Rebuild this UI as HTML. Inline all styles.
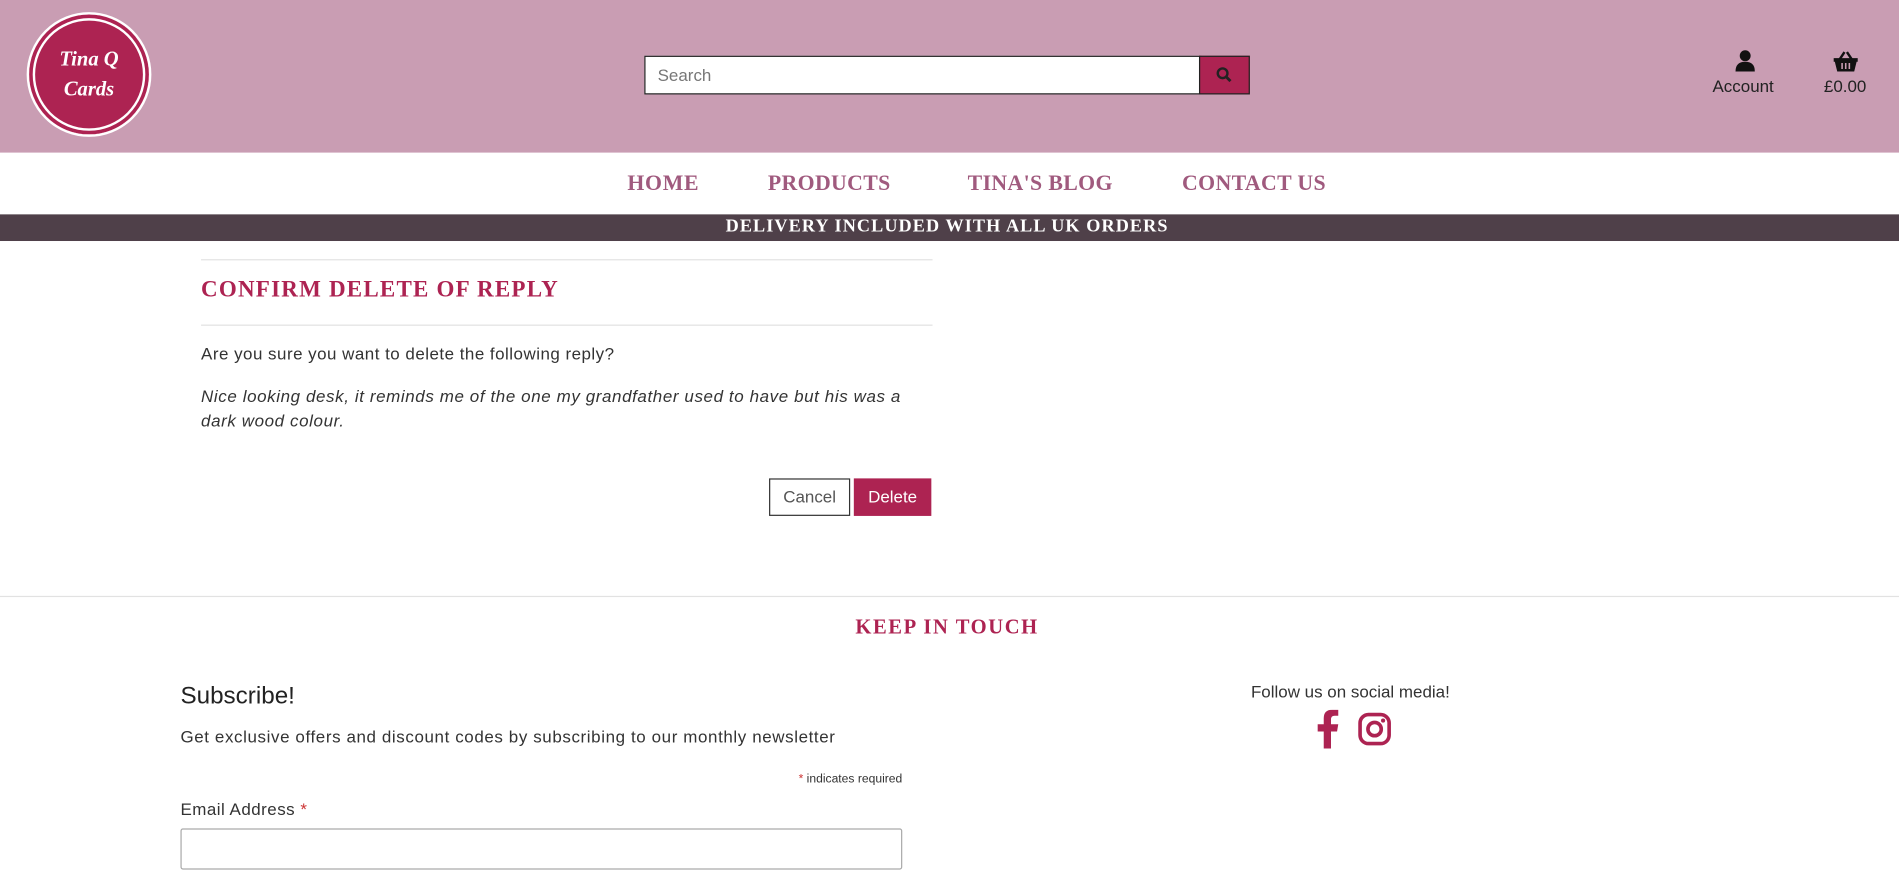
<!DOCTYPE html>
<html><head><meta charset="utf-8"><style>
html,body{margin:0;padding:0;overflow:hidden;width:1899px;height:886px;background:#fff}
#w{position:absolute;left:0;top:0;width:1568px;height:732px;transform:scale(1.2111);transform-origin:0 0;font-family:"Liberation Sans",sans-serif;color:#333}
.a{position:absolute;white-space:nowrap}
.serif{font-family:"Liberation Serif",serif;font-weight:bold}
.b{letter-spacing:0.4px}
</style></head><body><div id="w">
<div class="a" style="left:0;top:0;width:1568px;height:126px;background:#c99db3"></div>
<div class="a" style="left:22px;top:10px;width:99px;height:99px;border-radius:50%;background:#ad2352;border:2px solid #fff;box-shadow:inset 0 0 0 3px #ad2352, inset 0 0 0 5px #fff"></div>
<div class="a serif" style="left:22px;top:36px;width:103px;text-align:center;color:#fff;font-style:italic;font-size:17px;line-height:25px">Tina Q<br>Cards</div>
<div class="a" style="left:532px;top:46px;width:458px;height:30px;background:#fff;border:1px solid #222"></div>
<div class="a" style="left:543px;top:54px;font-size:14px;color:#777">Search</div>
<div class="a" style="left:990px;top:46px;width:40px;height:30px;background:#ad2352;border:1px solid #222"></div>
<svg class="a" style="left:1004px;top:55px" width="13" height="13" viewBox="0 0 13 13"><circle cx="5.5" cy="5.5" r="4" fill="none" stroke="#222" stroke-width="2"/><path d="M8.5 8.5L12 12" stroke="#222" stroke-width="2.4"/></svg>
<svg class="a" style="left:1433px;top:41px" width="16" height="18" viewBox="0 0 16 18"><circle cx="8" cy="5" r="4.5" fill="#111"/><path d="M0 18Q0 10 8 10Q16 10 16 18Z" fill="#111"/></svg>
<div class="a" style="left:1414px;top:63px;font-size:14px;color:#222">Account</div>
<svg class="a" style="left:1514px;top:42px" width="20" height="17" viewBox="0 0 20 17"><path d="M5 7L9 1M15 7L11 1" stroke="#111" stroke-width="2"/><path d="M0 6H20V9H19L17 17H3L1 9H0Z" fill="#111"/><path d="M7 10V15M10 10V15M13 10V15" stroke="#c99db3" stroke-width="1.3"/></svg>
<div class="a" style="left:1506px;top:63px;font-size:14px;color:#222">£0.00</div>
<div class="a serif" style="left:518px;top:141px;font-size:18px;color:#a05a7e;letter-spacing:0.6px">HOME</div>
<div class="a serif" style="left:634px;top:141px;font-size:18px;color:#a05a7e;letter-spacing:0.3px">PRODUCTS</div>
<div class="a serif" style="left:799px;top:141px;font-size:18px;color:#a05a7e;letter-spacing:0.3px">TINA'S BLOG</div>
<div class="a serif" style="left:976px;top:141px;font-size:18px;color:#a05a7e;letter-spacing:0.3px">CONTACT US</div>
<div class="a" style="left:0;top:177px;width:1568px;height:22px;background:#4f4049"></div>
<div class="a serif" style="left:0;top:179px;width:1564px;text-align:center;color:#fff;font-size:15px;letter-spacing:0.9px">DELIVERY INCLUDED WITH ALL UK ORDERS</div>
<div class="a" style="left:166px;top:214px;width:604px;height:1px;background:#e2e2e2"></div>
<div class="a serif" style="left:166px;top:229px;font-size:19px;color:#ad2352;letter-spacing:1px">CONFIRM DELETE OF REPLY</div>
<div class="a" style="left:166px;top:268px;width:604px;height:1px;background:#e2e2e2"></div>
<div class="a b" style="left:166px;top:284px;font-size:14px">Are you sure you want to delete the following reply?</div>
<div class="a b" style="left:166px;top:317px;font-size:14px;font-style:italic;line-height:20px;letter-spacing:0.5px">Nice looking desk, it reminds me of the one my grandfather used to have but his was a<br>dark wood colour.</div>
<div class="a" style="left:635px;top:395px;width:65px;height:29px;border:1px solid #333;text-align:center;line-height:29px;font-size:14px;color:#555">Cancel</div>
<div class="a" style="left:705px;top:395px;width:64px;height:31px;background:#ad2352;text-align:center;line-height:31px;font-size:14px;color:#fff">Delete</div>
<div class="a" style="left:0;top:492px;width:1568px;height:1px;background:#e2e2e2"></div>
<div class="a serif" style="left:0;top:508px;width:1564px;text-align:center;font-size:17px;color:#ad2352;letter-spacing:1.3px">KEEP IN TOUCH</div>
<div class="a" style="left:149px;top:564px;font-size:20px;color:#222">Subscribe!</div>
<div class="a b" style="left:149px;top:600px;font-size:14px;letter-spacing:0.5px">Get exclusive offers and discount codes by subscribing to our monthly newsletter</div>
<div class="a" style="left:560px;top:638px;width:185px;text-align:right;font-size:10px"><span style="color:#c33">*</span> indicates required</div>
<div class="a b" style="left:149px;top:660px;font-size:14px">Email Address <span style="color:#c33">*</span></div>
<div class="a" style="left:149px;top:684px;width:594px;height:32px;border:1px solid #aaa;border-radius:2px"></div>
<div class="a" style="left:1015px;top:563px;width:200px;text-align:center;font-size:14px">Follow us on social media!</div>
<svg class="a" style="left:1086px;top:586px" width="20" height="32" viewBox="0 0 20 32"><path d="M13 32V18H18L19 12H13V8Q13 5 16 5H19V0Q16 0 14 0Q7 0 7 7V12H2V18H7V32Z" fill="#ad2352"/></svg>
<svg class="a" style="left:1121px;top:588px" width="28" height="28" viewBox="0 0 28 28"><rect x="2" y="2" width="24" height="24" rx="7" fill="none" stroke="#ad2352" stroke-width="3"/><circle cx="14" cy="14" r="5.5" fill="none" stroke="#ad2352" stroke-width="3"/><circle cx="21" cy="7" r="1.7" fill="#ad2352"/></svg>
</div></body></html>
